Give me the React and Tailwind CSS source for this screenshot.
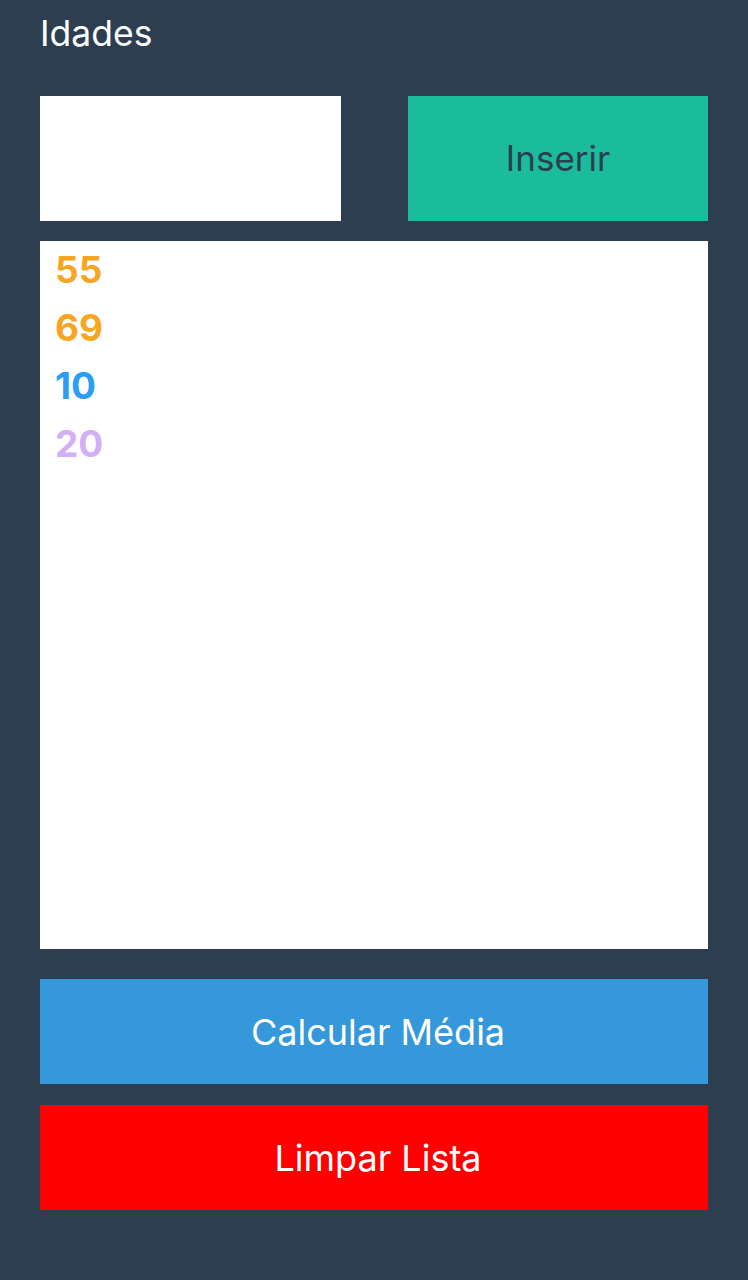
import { useState } from "react";

const ages = [
  { value: 55, color: "text-[#f5a623]" },
  { value: 69, color: "text-[#f5a623]" },
  { value: 10, color: "text-[#2a9df4]" },
  { value: 20, color: "text-[#d3aff7]" },
];

const App = () => {
  const [age, setAge] = useState("");

  return (
    <div className="min-h-screen bg-[#2c3e50] px-10 pt-[10px] font-['Inter',sans-serif]">
      {/* Title */}
      <h1 className="text-[35.5px] leading-[48px] text-white">Idades</h1>

      {/* Input row */}
      <div className="mt-[38px] flex justify-between">
        <input
          value={age}
          onChange={(e) => setAge(e.target.value)}
          className="h-[125px] w-[301px] bg-white px-3 text-[35px] outline-none"
        />
        <button className="h-[125px] w-[300px] bg-[#1abc9c] text-[35px] text-[#2c3e50]">
          Inserir
        </button>
      </div>

      {/* List */}
      <div className="mt-5 h-[708px] bg-white px-[15px]">
        {ages.map((a, i) => (
          <div key={i} className={`text-[37px] font-bold leading-[58px] ${a.color}`}>
            {a.value}
          </div>
        ))}
      </div>

      {/* Actions */}
      <button className="mt-[30px] h-[105px] w-full bg-[#3498db] pl-2 text-[36px] text-white">
        Calcular Média
      </button>
      <button className="mt-[21px] h-[105px] w-full bg-[#ff0000] pl-2 text-[36px] text-white">
        Limpar Lista
      </button>
    </div>
  );
};

export default App;
